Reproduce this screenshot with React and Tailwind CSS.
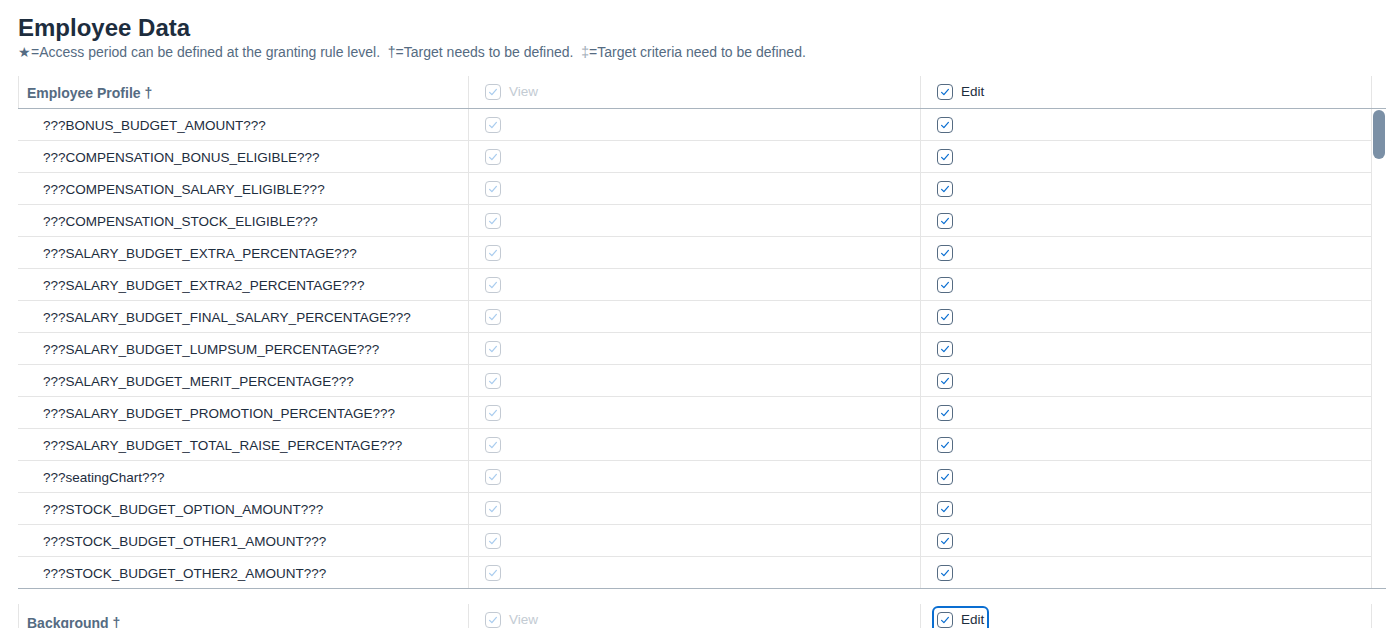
import React from 'react';

const fields = [
  '???BONUS_BUDGET_AMOUNT???',
  '???COMPENSATION_BONUS_ELIGIBLE???',
  '???COMPENSATION_SALARY_ELIGIBLE???',
  '???COMPENSATION_STOCK_ELIGIBLE???',
  '???SALARY_BUDGET_EXTRA_PERCENTAGE???',
  '???SALARY_BUDGET_EXTRA2_PERCENTAGE???',
  '???SALARY_BUDGET_FINAL_SALARY_PERCENTAGE???',
  '???SALARY_BUDGET_LUMPSUM_PERCENTAGE???',
  '???SALARY_BUDGET_MERIT_PERCENTAGE???',
  '???SALARY_BUDGET_PROMOTION_PERCENTAGE???',
  '???SALARY_BUDGET_TOTAL_RAISE_PERCENTAGE???',
  '???seatingChart???',
  '???STOCK_BUDGET_OPTION_AMOUNT???',
  '???STOCK_BUDGET_OTHER1_AMOUNT???',
  '???STOCK_BUDGET_OTHER2_AMOUNT???',
];

// 체크박스 (disabled = View 열)
function Check({ disabled }) {
  return (
    <span
      className={
        'inline-flex w-4 h-4 shrink-0 items-center justify-center rounded-[4px] border bg-white ' +
        (disabled ? 'border-[#556b82] opacity-35' : 'border-[#556b82]')
      }
    >
      <svg width="12" height="12" viewBox="0 0 12 12" fill="none">
        <path d="M2.6 6.3 L4.9 8.6 L9.4 3.4" stroke="#0a6ed1" strokeWidth="1.2" strokeLinecap="round" strokeLinejoin="round" />
      </svg>
    </span>
  );
}

function HeaderRow({ title, focusEdit }) {
  return (
    <div className="flex w-[1368px] h-[33px] border-b border-[#a9b4be]">
      <div className="grid grid-cols-[451px_452px_451px] w-[1354px]">
        <div
          className={
            'flex items-center pl-2 border-l border-r border-[#e5e5e5] text-[14px] font-bold text-[#556b82] ' +
            (focusEdit ? 'pt-[6px]' : 'pt-[3px]')
          }
        >
          {title}
        </div>
        <div className="flex items-center gap-2 pl-4 border-r border-[#e5e5e5] text-[13.5px] text-[#c3cbd3]">
          <Check disabled />
          <span>View</span>
        </div>
        <div className="flex items-center pl-[11px] border-r border-[#e5e5e5] text-[13.5px] text-[#1d2d3e]">
          <span
            className={
              'flex items-center gap-2 px-[3px] py-[2px] rounded-[6px] border-2 ' +
              (focusEdit ? 'border-[#0a6ed1]' : 'border-transparent')
            }
          >
            <Check />
            <span>Edit</span>
          </span>
        </div>
      </div>
    </div>
  );
}

export default function App() {
  return (
    <div className="bg-white min-h-screen pl-[18px] pt-[14px] font-['Liberation_Sans',Arial,sans-serif] overflow-hidden h-[628px]">
      <h1 className="text-[24px] leading-[28px] font-bold text-[#1d2d3e]">Employee Data</h1>
      <p className="mt-[2px] text-[14px] leading-[17px] text-[#556b82] whitespace-pre">
        {'★=Access period can be defined at the granting rule level.  †=Target needs to be defined.  '}
        <span className="text-[#a0acb8]">‡</span>
        {'=Target criteria need to be defined.'}
      </p>

      <div className="mt-[15px]">
        <HeaderRow title="Employee Profile †" />
        <div className="flex w-[1368px] border-b border-[#a9b4be]">
          <div className="w-[1354px]">
            {fields.map((f) => (
              <div
                key={f}
                className="grid grid-cols-[451px_452px_451px] h-[32px] border-b border-[#e5e5e5] last:border-b-0 last:h-[31px]"
              >
                <div className="flex items-center pl-[25px] pt-[3px] border-r border-[#e5e5e5] text-[13.5px] text-[#1d2d3e]">
                  {f}
                </div>
                <div className="flex items-center pl-4 border-r border-[#e5e5e5]">
                  <Check disabled />
                </div>
                <div className="flex items-center pl-4 border-r border-[#e5e5e5]">
                  <Check />
                </div>
              </div>
            ))}
          </div>
          {/* 스크롤바 */}
          <div className="w-[14px] pt-[1px] pl-[1px]">
            <div className="w-[12px] h-[49px] rounded-full bg-[#7b90a6]" />
          </div>
        </div>
      </div>

      <div className="mt-[15px]">
        <HeaderRow title="Background †" focusEdit />
      </div>
    </div>
  );
}
